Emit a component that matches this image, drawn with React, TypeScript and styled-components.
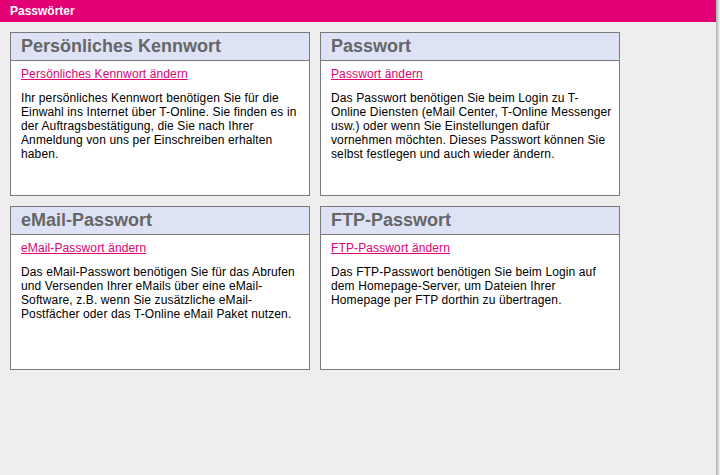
import styled, { createGlobalStyle } from 'styled-components';

const GlobalStyle = createGlobalStyle`
  html, body {
    margin: 0;
    padding: 0;
    background: #ffffff;
  }
  body {
    font-family: "Liberation Sans", Arial, Helvetica, sans-serif;
  }
`;

const Frame = styled.div`
  display: flex;
  width: 720px;
  height: 475px;
  overflow: hidden;
`;

const Main = styled.div`
  width: 716px;
  flex: none;
  background-color: #eeeeee;
  display: flex;
  flex-direction: column;
`;

const Edge = styled.div`
  flex: 1;
  background: linear-gradient(90deg, #a8a8a8 0%, #d4d4d4 50%, #f4f4f4 100%);
`;

const TopBar = styled.div`
  height: 22px;
  line-height: 22px;
  background-color: #e20074;
  color: #ffffff;
  font-size: 12px;
  font-weight: 700;
  padding-left: 10px;
`;

const Grid = styled.div`
  display: grid;
  grid-template-columns: 300px 300px;
  grid-auto-rows: 164px;
  gap: 10px;
  padding: 10px 0 0 10px;
`;

const Card = styled.section`
  box-sizing: border-box;
  border: 1px solid #7a7a7a;
  background-color: #ffffff;
  display: flex;
  flex-direction: column;
`;

const CardHeader = styled.h2`
  margin: 0;
  height: 27px;
  line-height: 27px;
  padding-left: 10px;
  background-color: #dde3f5;
  border-bottom: 1px solid #7a7a7a;
  color: #666666;
  font-size: 18px;
  font-weight: 700;
  white-space: nowrap;
`;

const CardBody = styled.div`
  padding: 6px 5px 0 10px;
  font-size: 12px;
  line-height: 14px;
  letter-spacing: 0.12px;
  color: #000000;
`;

const ChangeLink = styled.a`
  display: block;
  color: #e20074;
  text-decoration: underline;
  margin-bottom: 10px;
  cursor: pointer;
`;

const Text = styled.p`
  margin: 0;
`;

const cards = [
  {
    title: 'Persönliches Kennwort',
    link: 'Persönliches Kennwort ändern',
    text: 'Ihr persönliches Kennwort benötigen Sie für die Einwahl ins Internet über T-Online. Sie finden es in der Auftragsbestätigung, die Sie nach Ihrer Anmeldung von uns per Einschreiben erhalten haben.',
  },
  {
    title: 'Passwort',
    link: 'Passwort ändern',
    text: 'Das Passwort benötigen Sie beim Login zu T-Online Diensten (eMail Center, T-Online Messenger usw.) oder wenn Sie Einstellungen dafür vornehmen möchten. Dieses Passwort können Sie selbst festlegen und auch wieder ändern.',
  },
  {
    title: 'eMail-Passwort',
    link: 'eMail-Passwort ändern',
    text: 'Das eMail-Passwort benötigen Sie für das Abrufen und Versenden Ihrer eMails über eine eMail-Software, z.B. wenn Sie zusätzliche eMail-Postfächer oder das T-Online eMail Paket nutzen.',
  },
  {
    title: 'FTP-Passwort',
    link: 'FTP-Passwort ändern',
    text: 'Das FTP-Passwort benötigen Sie beim Login auf dem Homepage-Server, um Dateien Ihrer Homepage per FTP dorthin zu übertragen.',
  },
];

export default function App() {
  return (
    <>
      <GlobalStyle />
      <Frame>
        <Main>
          <TopBar>Passwörter</TopBar>
          <Grid>
            {cards.map((c) => (
              <Card key={c.title}>
                <CardHeader>{c.title}</CardHeader>
                <CardBody>
                  <ChangeLink>{c.link}</ChangeLink>
                  <Text>{c.text}</Text>
                </CardBody>
              </Card>
            ))}
          </Grid>
        </Main>
        <Edge />
      </Frame>
    </>
  );
}
